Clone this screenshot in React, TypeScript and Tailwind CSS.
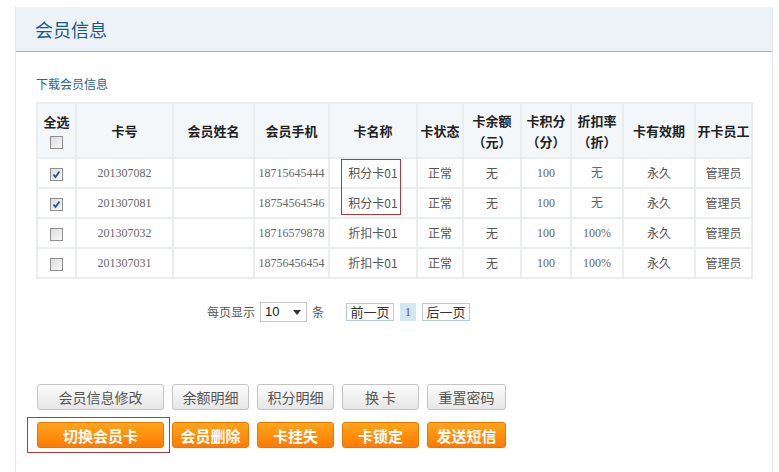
import React from 'react';

const cjk = '"Noto Sans CJK SC", "Noto Sans", sans-serif';
const num = '"Liberation Serif", "Noto Sans CJK SC", serif';

interface Member {
  card: string;
  phone: string;
  cardName: string;
  discount: string;
  checked: boolean;
}

const MEMBERS: Member[] = [
  { card: '201307082', phone: '18715645444', cardName: '积分卡01', discount: '无', checked: true },
  { card: '201307081', phone: '18754564546', cardName: '积分卡01', discount: '无', checked: true },
  { card: '201307032', phone: '18716579878', cardName: '折扣卡01', discount: '100%', checked: false },
  { card: '201307031', phone: '18756456454', cardName: '折扣卡01', discount: '100%', checked: false },
];

const COLS = [39, 97, 81, 75, 88, 46, 58, 50, 52, 72, 57];

const Checkbox: React.FC<{ checked?: boolean }> = ({ checked }) => (
  <span className="inline-flex h-[13px] w-[13px] items-center justify-center border border-[#8f8f8f] bg-gradient-to-br from-[#dcdcdc] to-[#f8f8f8] align-middle">
    {checked && (
      <svg width="9" height="9" viewBox="0 0 9 9">
        <path d="M1.5 4.5 L3.5 7 L7.5 1.5" fill="none" stroke="#2a4f8f" strokeWidth="1.8" />
      </svg>
    )}
  </span>
);

const GrayButton: React.FC<{ label: string; w: string }> = ({ label, w }) => (
  <button
    className={`${w} h-[26px] rounded-[3px] border border-[#c4c4c4] bg-gradient-to-b from-[#fdfdfd] to-[#e6e6e6] text-[14px] leading-none text-[#555]`}
    style={{ fontFamily: cjk }}
  >
    {label}
  </button>
);

const OrangeButton: React.FC<{ label: string; w: string }> = ({ label, w }) => (
  <button
    className={`${w} h-[26px] rounded-[3px] border border-[#e67a00] bg-gradient-to-b from-[#ffa41a] to-[#ff7a00] text-[15px] font-bold leading-none text-white`}
    style={{ fontFamily: cjk }}
  >
    {label}
  </button>
);

export default function App() {
  const th = 'border-2 border-[#e9edf0] bg-[#f3f7fa] text-center align-middle text-[13px] font-bold text-[#222] leading-[21px]';
  const td = 'border-2 border-[#e9edf0] h-[30px] text-center align-middle text-[12px] text-[#555]';

  return (
    <div className="h-[472px] w-[779px] overflow-hidden bg-white" style={{ fontFamily: cjk }}>
      <div className="ml-[15px] mt-[7px] h-[465px] w-[758px] border-x border-[#e3e8ed]">
        <div className="flex h-[45px] items-center border-b border-[#a7b2bd] bg-[#edf2f7] pl-[19px]">
          <span className="text-[18px] text-[#1b5a8c]">会员信息</span>
        </div>

        <div className="pl-[20px]">
          <div className="pt-[24px] text-[12px] leading-[16px] text-[#2a6496]">下载会员信息</div>

          <div className="relative mt-[10px]">
            <table className="table-fixed border-collapse" style={{ width: 715 }}>
              <colgroup>
                {COLS.map((w, i) => (
                  <col key={i} style={{ width: w }} />
                ))}
              </colgroup>
              <thead>
                <tr className="h-[55px]">
                  <th className={th}>
                    <div>全选</div>
                    <div className="leading-[18px]"><Checkbox /></div>
                  </th>
                  <th className={th}>卡号</th>
                  <th className={th}>会员姓名</th>
                  <th className={th}>会员手机</th>
                  <th className={th}>卡名称</th>
                  <th className={th}>卡状态</th>
                  <th className={th}>卡余额<br />（元）</th>
                  <th className={th}>卡积分<br />（分）</th>
                  <th className={th}>折扣率<br />（折）</th>
                  <th className={th}>卡有效期</th>
                  <th className={th}>开卡员工</th>
                </tr>
              </thead>
              <tbody>
                {MEMBERS.map((m) => (
                  <tr key={m.card}>
                    <td className={td}><Checkbox checked={m.checked} /></td>
                    <td className={`${td} text-[#666]`} style={{ fontFamily: num }}>{m.card}</td>
                    <td className={td}></td>
                    <td className={`${td} text-[#666]`} style={{ fontFamily: num }}>{m.phone}</td>
                    <td className={td}>{m.cardName}</td>
                    <td className={td}>正常</td>
                    <td className={td}>无</td>
                    <td className={`${td} text-[#666]`} style={{ fontFamily: num }}>100</td>
                    <td className={`${td} text-[#666]`} style={{ fontFamily: num }}>{m.discount}</td>
                    <td className={td}>永久</td>
                    <td className={td}>管理员</td>
                  </tr>
                ))}
              </tbody>
            </table>
            {/* highlight annotation */}
            <div className="pointer-events-none absolute left-[305px] top-[57px] h-[56px] w-[60px] border border-[#b23a3a]" />
          </div>

          <div className="mt-[22px] flex h-[22px] items-center pl-[171px] text-[12px] text-[#555]">
            <span>每页显示</span>
            <div className="ml-[5px] flex h-[20px] w-[47px] items-center justify-between border border-[#c8c8c8] bg-white pl-[4px] pr-[5px]">
              <span className="text-[13px] text-[#222]" style={{ fontFamily: '"Liberation Sans", sans-serif' }}>10</span>
              <svg width="8" height="5" viewBox="0 0 8 5"><path d="M0 0 H8 L4 5 Z" fill="#333" /></svg>
            </div>
            <span className="ml-[5px]">条</span>
            <div className="ml-[22px] flex items-center gap-[6px]">
              <span className="flex h-[18px] w-[48px] items-center justify-center border border-[#b7c9d6] bg-white text-[13px] text-[#333]">前一页</span>
              <span className="flex h-[18px] w-[16px] items-center justify-center bg-[#d3e6f3] text-[12px] text-[#555]" style={{ fontFamily: num }}>1</span>
              <span className="flex h-[18px] w-[48px] items-center justify-center border border-[#b7c9d6] bg-white text-[13px] text-[#333]">后一页</span>
            </div>
          </div>

          <div className="relative mt-[61px] flex flex-col gap-[12px] pl-[1px]">
            <div className="flex gap-[8px]">
              <GrayButton label="会员信息修改" w="w-[127px]" />
              <GrayButton label="余额明细" w="w-[77px]" />
              <GrayButton label="积分明细" w="w-[77px]" />
              <GrayButton label="换 卡" w="w-[77px]" />
              <GrayButton label="重置密码" w="w-[79px]" />
            </div>
            <div className="flex gap-[8px]">
              <OrangeButton label="切换会员卡" w="w-[127px]" />
              <OrangeButton label="会员删除" w="w-[77px]" />
              <OrangeButton label="卡挂失" w="w-[77px]" />
              <OrangeButton label="卡锁定" w="w-[77px]" />
              <OrangeButton label="发送短信" w="w-[79px]" />
            </div>
            {/* highlight annotation */}
            <div className="pointer-events-none absolute left-[-9px] top-[33px] h-[36px] w-[143px] border border-[#b23a3a]" />
          </div>
        </div>
      </div>
    </div>
  );
}
